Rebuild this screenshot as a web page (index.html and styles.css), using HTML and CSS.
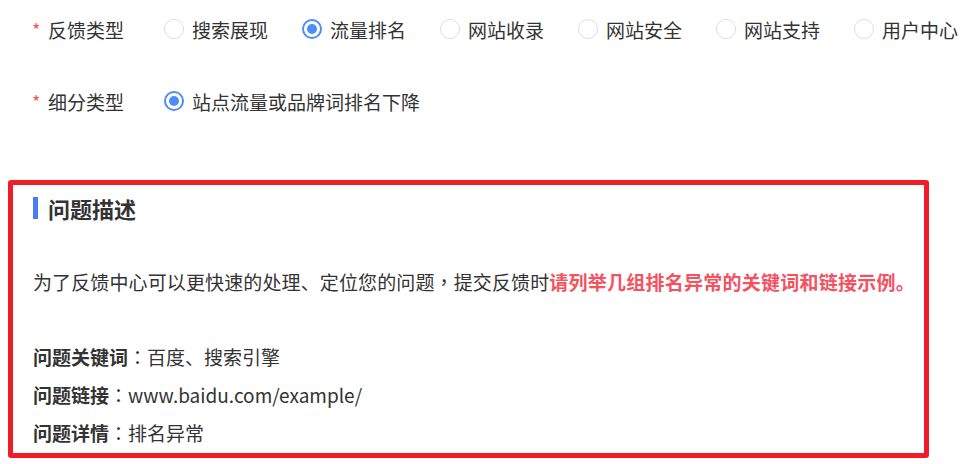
FILE: index.html
```html
<!DOCTYPE html>
<html lang="zh-CN">
<head>
  <meta charset="UTF-8" />
  <title>问题反馈</title>
  <link rel="stylesheet" href="styles.css">
</head>
<body>
  <form class="feedback">
    <div class="form-row">
      <label class="row-label"><span class="req">*</span>反馈类型</label>
      <div class="radio-group">
        <label class="radio"><span class="dot"></span>搜索展现</label>
        <label class="radio checked"><span class="dot"></span>流量排名</label>
        <label class="radio"><span class="dot"></span>网站收录</label>
        <label class="radio"><span class="dot"></span>网站安全</label>
        <label class="radio"><span class="dot"></span>网站支持</label>
        <label class="radio"><span class="dot"></span>用户中心</label>
      </div>
    </div>

    <div class="form-row second">
      <label class="row-label"><span class="req">*</span>细分类型</label>
      <div class="radio-group">
        <label class="radio checked"><span class="dot"></span>站点流量或品牌词排名下降</label>
      </div>
    </div>

    <div class="desc-box">
      <h3 class="desc-title">问题描述</h3>
      <p class="desc-tip">为了反馈中心可以更快速的处理、定位您的问题<span class="punct" lang="zh-TW">，</span>提交反馈时<span class="hl">请列举几组排名异常的关键词和链接示例。</span></p>
      <p class="desc-line"><b>问题关键词</b><span class="punct" lang="zh-TW">：</span>百度、搜索引擎</p>
      <p class="desc-line"><b>问题链接</b><span class="punct" lang="zh-TW">：</span>www.baidu.com/example/</p>
      <p class="desc-line"><b>问题详情</b><span class="punct" lang="zh-TW">：</span>排名异常</p>
    </div>
  </form>
</body>
</html>
```

FILE: styles.css
```css
body {
  margin: 0;
  font-family: "Noto Sans CJK SC", "Noto Sans", sans-serif;
  font-size: 19px;
  color: #333;
  background: #fff;
}

.feedback {
  padding-top: 9px;
}

.form-row {
  display: flex;
  align-items: center;
  height: 40px;
}

.form-row.second {
  margin-top: 32px;
}

.row-label {
  display: flex;
  align-items: center;
  width: 132px;
  padding-left: 32px;
  box-sizing: content-box;
  flex-shrink: 0;
  white-space: nowrap;
}

.req {
  color: #f5515f;
  width: 16px;
  font-size: 18px;
}

.radio-group {
  display: flex;
  align-items: center;
}

.radio {
  display: flex;
  align-items: center;
  margin-right: 34px;
  white-space: nowrap;
}

.dot {
  width: 20px;
  height: 20px;
  box-sizing: border-box;
  border: 1px solid #ddd;
  border-radius: 50%;
  margin-right: 8px;
  display: flex;
  align-items: center;
  justify-content: center;
}

.radio.checked .dot {
  border: 2px solid #4e8cf7;
}

.radio.checked .dot::after {
  content: "";
  width: 10px;
  height: 10px;
  border-radius: 50%;
  background: #4e8cf7;
}

.desc-box {
  margin: 59px 0 0 8px;
  width: 921px;
  height: 278px;
  box-sizing: border-box;
  border: 5px solid #f01d27;
  border-radius: 3px;
  padding: 8px 20px 0 20px;
}

.desc-title {
  margin: 0;
  font-size: 22px;
  font-weight: bold;
  line-height: 30px;
  display: flex;
  align-items: center;
}

.desc-title::before {
  content: "";
  width: 5px;
  height: 22px;
  background: #4a7cf6;
  margin-right: 10px;
}

.desc-tip {
  margin: 40px 0 0 0;
  line-height: 38px;
  letter-spacing: 0.12px;
  white-space: nowrap;
}

.punct {
  font-family: "Noto Sans CJK TC", sans-serif;
  font-feature-settings: "locl";
}

.hl {
  color: #f5515f;
  font-weight: bold;
  letter-spacing: 0.25px;
}

.desc-line {
  margin: 0;
  line-height: 38px;
}

.desc-tip + .desc-line {
  margin-top: 37px;
}

.desc-line b {
  font-weight: bold;
}
```
